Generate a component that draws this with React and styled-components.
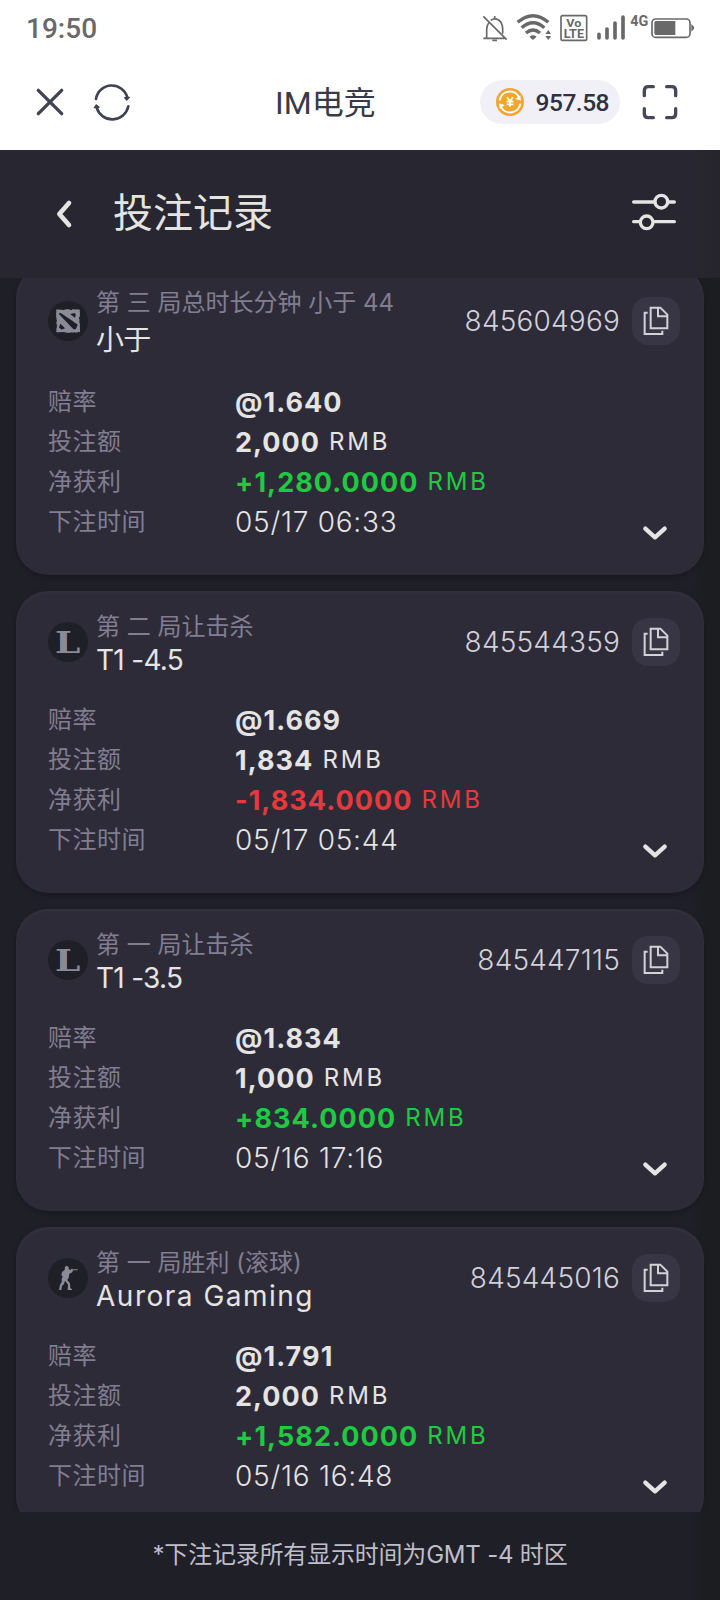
import styled, { createGlobalStyle } from "styled-components";
import { SiDota2 } from "react-icons/si";

const bets = [
  {
    id: "845604969",
    game: "dota",
    market: "第 三 局总时长分钟 小于 44",
    pick: "小于",
    odds: "@1.640",
    stake: "2,000",
    profit: "+1,280.0000",
    time: "05/17 06:33",
    tall: true,
  },
  {
    id: "845544359",
    game: "lol",
    market: "第 二 局让击杀",
    pick: "T1 -4.5",
    odds: "@1.669",
    stake: "1,834",
    profit: "-1,834.0000",
    time: "05/17 05:44",
  },
  {
    id: "845447115",
    game: "lol",
    market: "第 一 局让击杀",
    pick: "T1 -3.5",
    odds: "@1.834",
    stake: "1,000",
    profit: "+834.0000",
    time: "05/16 17:16",
  },
  {
    id: "845445016",
    game: "cs",
    market: "第 一 局胜利 (滚球)",
    pick: "Aurora Gaming",
    odds: "@1.791",
    stake: "2,000",
    profit: "+1,582.0000",
    time: "05/16 16:48",
    wide: true,
  },
];

const GlobalStyle = createGlobalStyle`
  * {
    box-sizing: border-box;
  }
  body {
    margin: 0;
    background-color: #1f1f28;
  }
  svg {
    display: block;
    flex-shrink: 0;
  }
`;

const Page = styled.div`
  display: flex;
  flex-direction: column;
  width: 720px;
  height: 1600px;
  overflow: hidden;
  color: #e4e4e2;
  font-family: Inter, "Noto Sans CJK SC", sans-serif;
  white-space: nowrap;
  background: linear-gradient(to right, #1f1f28 690px, #1c1d20 708px);
`;

const StatusBar = styled.div`
  display: flex;
  justify-content: space-between;
  align-items: center;
  height: 54px;
  padding: 2px 25px 0 26px;
  background-color: #fff;
  color: #696969;
  font: 500 28px Roboto, sans-serif;
`;

const StatusIconRow = styled.div`
  display: flex;
  align-items: center;
  gap: 8px;
`;

const NetworkIcons = styled.div`
  display: flex;
  align-items: center;

  svg:nth-child(2) {
    margin-left: 4px;
  }
`;

const IconText = styled.text`
  fill: #696969;
  font-family: Roboto, sans-serif;
  font-weight: 700;
`;

const NavBar = styled.div`
  display: grid;
  grid-template-columns: 240px auto 1fr;
  align-items: center;
  height: 96px;
  padding: 0 40px 0 35px;
  background-color: #fff;
`;

const NavSide = styled.div`
  display: flex;
  align-items: center;
  justify-content: ${({ $end }) => ($end ? "flex-end" : "flex-start")};
  gap: ${({ $end }) => ($end ? "20px" : "27px")};
`;

const NavTitle = styled.div`
  padding-bottom: 4px;
  color: #383a48;
  font: 400 32px Roboto, "Noto Sans CJK SC", sans-serif;
`;

const Balance = styled.div`
  display: flex;
  align-items: center;
  justify-content: space-between;
  width: 140px;
  height: 44px;
  padding: 0 11px 0 16px;
  border-radius: 22px;
  background-color: #f1f0f6;
  color: #2f3142;
  font: 500 24.5px Roboto, sans-serif;
  letter-spacing: -0.5px;
`;

const PageHeader = styled.header`
  display: flex;
  align-items: center;
  height: 128px;
  padding: 0 44px 5px 55px;
  background: linear-gradient(to right, #282630 690px, #26242d 716px);
`;

const BackButton = styled.div`
  padding-top: 5px;
`;

const PageTitle = styled.h1`
  flex: 1;
  margin: 3px 0 0 38px;
  font-size: 40px;
  font-weight: 400;
  line-height: 56px;
`;

const List = styled.main`
  display: flex;
  flex-direction: column;
  justify-content: flex-end;
  gap: 16px;
  height: 1234px;
  padding: 0 16px;
  overflow: hidden;

  /* the list is scrolled, so its first and last cards are cut off */
  & > section:last-child {
    margin-bottom: -17px;
  }
`;

const Card = styled.section`
  flex-shrink: 0;
  padding: 20px 24px 33px 32px;
  border-radius: 32px;
  background-color: #2e2b38;
  box-shadow: 0 2px 5px rgba(0, 0, 0, 0.25), inset 0 2px 4px rgba(255, 255, 255, 0.04);
`;

const CardHeader = styled.div`
  display: flex;
  align-items: center;
  height: ${({ $tall }) => ($tall ? "69px" : "62px")};
  margin-bottom: 27px;
`;

const GameBadge = styled.div`
  display: flex;
  align-items: center;
  justify-content: center;
  width: 40px;
  height: 40px;
  margin-right: 8px;
  border-radius: 50%;
  background-color: #1f1f28;
  color: #8b8b98;
`;

const LolMark = styled.text`
  fill: #8b8b98;
  font-family: "DejaVu Serif", serif;
  font-size: 30px;
  font-weight: 700;
`;

const Names = styled.div`
  flex: 1;
  display: flex;
  flex-direction: column;
  gap: ${({ $tall }) => ($tall ? "5px" : "1px")};
  padding-top: 2px;
`;

const Market = styled.div`
  color: #817e92;
  font-size: 24px;
  line-height: 33px;
`;

const Pick = styled.div`
  font-size: 28px;
  line-height: 33px;
  letter-spacing: ${({ $wide }) => ($wide ? "1.5px" : "-0.7px")};
`;

const BetId = styled.div`
  margin-right: 12px;
  color: #d2d1d8;
  font-size: 28px;
  font-weight: 300;
  letter-spacing: 0.2px;
`;

const CopyButton = styled.div`
  width: 48px;
  height: 48px;
  border-radius: 16px;
  background-color: #383645;
`;

const Details = styled.div`
  display: flex;
  flex-direction: column;
`;

const Row = styled.div`
  display: flex;
  align-items: center;
  height: 40px;
  color: ${({ $color }) => $color || "#e4e4e2"};
`;

const Label = styled.div`
  width: 187px;
  padding-bottom: 5px;
  color: #817e92;
  font-size: 24px;
  letter-spacing: 0.5px;
`;

const Amount = styled.div`
  font-size: 27px;
  font-weight: 700;
  letter-spacing: 1.05px;
`;

const Currency = styled.div`
  margin-left: 9px;
  padding-bottom: 1px;
  font-size: 24px;
  letter-spacing: 2.8px;
`;

const Time = styled.div`
  flex: 1;
  font-size: 28px;
  font-weight: 300;
  letter-spacing: 0.75px;
`;

const Expand = styled.div`
  padding: 22px 11px 0 0;
`;

const Footer = styled.footer`
  height: 88px;
  padding-top: 25px;
  color: #bfbdca;
  font-size: 24px;
  line-height: 36px;
  letter-spacing: -0.2px;
  text-align: center;
`;

const StatusIcons = () => (
  <StatusIconRow>
    <svg width="26" height="30" viewBox="366 36 78 90" fill="none" stroke="#696969" strokeWidth="5">
      <path d="M370 46 440 116M370 112H434M380 111V86Q380 74 386 66M392 58Q404 50 416 57Q428 66 428 84V98" />
      <path d="M404 45V53M397 118H411" />
    </svg>
    <svg width="36" height="30" viewBox="468 36 108 90" fill="none" stroke="#696969" strokeWidth="10">
      <path d="M473 64Q519 24 565 64M485 80Q519 50 553 80M498 96Q519 78 540 96" />
      <path d="M508 107Q519 99 530 107L519 117ZM556 99 565 87 573 99ZM556 105H573L565 117Z" fill="#696969" stroke="none" />
    </svg>
    <svg width="28" height="30" viewBox="599 36 84 90">
      <rect x="602" y="44" width="77" height="74" rx="5" fill="none" stroke="#696969" strokeWidth="5" />
      <IconText x="618" y="77" fontSize="31" textLength="45" lengthAdjust="spacingAndGlyphs">Vo</IconText>
      <IconText x="610" y="111" fontSize="38" textLength="61" lengthAdjust="spacingAndGlyphs">LTE</IconText>
    </svg>
    <NetworkIcons>
      <svg width="30" height="30" viewBox="708 36 90 90" stroke="#696969" strokeWidth="11" strokeLinecap="round">
        <path d="M717 100V111M741 84V111M765 66V111M789 48V111" />
      </svg>
      <svg width="21" height="30" viewBox="810 36 63 90">
        <IconText x="811" y="75" fontSize="43" textLength="54" lengthAdjust="spacingAndGlyphs">4G</IconText>
      </svg>
      <svg width="44" height="30" viewBox="872 36 132 90" fill="#696969">
        <rect x="875" y="54" width="114" height="55" rx="11" fill="none" stroke="#696969" strokeWidth="5" />
        <path d="M882 65Q882 60 887 60H945V102H887Q882 102 882 97ZM993 69 1001 77V84L993 92Z" />
      </svg>
    </NetworkIcons>
  </StatusIconRow>
);

const CloseIcon = () => (
  <svg width="30" height="40" viewBox="104 245 90 120" stroke="#3f4454" strokeWidth="10" strokeLinecap="round">
    <path d="M114 270 184 340M184 270 114 340" />
  </svg>
);

const RefreshIcon = () => (
  <svg width="40" height="40" viewBox="277 245 120 120" fill="none" stroke="#3f4454" strokeWidth="8" strokeLinecap="round">
    <path d="M289 296A48 48 0 0 1 383 292M386 318A49 49 0 0 1 291 322" />
    <path d="M375 292 389 291 381 299ZM284 322 290 314 298 321Z" fill="#3f4454" strokeWidth="4" strokeLinejoin="round" />
  </svg>
);

const CoinIcon = () => (
  <svg width="28" height="28" viewBox="0 0 84 84" fill="none">
    <circle cx="42" cy="42" r="42" fill="#f0a62f" />
    <path d="M11 37A31 31 0 0 1 70 29M73 47A31 31 0 0 1 14 55" stroke="#fff" strokeWidth="6" />
    <path d="M58 33 75 38 73 22ZM26 51 9 46 11 62Z" fill="#fff" />
    <path d="M33 28 42 39 51 28M42 39V56M32 41H52M32 49H52" stroke="#fff" strokeWidth="5" />
  </svg>
);

const ScanIcon = () => (
  <svg width="40" height="40" viewBox="840 245 120 120" fill="none" stroke="#45485a" strokeWidth="10" strokeLinecap="round">
    <path d="M853 286V271Q853 259 865 259H880M920 259H935Q947 259 947 271V286M947 325V340Q947 352 935 352H920M880 352H865Q853 352 853 340V325" />
  </svg>
);

const BackIcon = () => (
  <svg width="20" height="32" viewBox="165 144 60 96" fill="none" stroke="#e4e4e2" strokeWidth="14" strokeLinecap="round" strokeLinejoin="round">
    <path d="M207 159 178 192 207 225" />
  </svg>
);

const FilterIcon = () => (
  <svg width="44" height="40" viewBox="816 124 132 120" fill="none" stroke="#e4e4e2" strokeWidth="10" strokeLinecap="round">
    <path d="M821 154H884M925 154H943M821 213H840M881 213H943" />
    <circle cx="904" cy="153" r="19" />
    <circle cx="860" cy="215" r="19" />
  </svg>
);

const CopyIcon = () => (
  <svg width="48" height="48" viewBox="816 441 144 144" fill="none" stroke="#d2d1d8" strokeWidth="6">
    <path d="M872 473H901L922 494V535H872ZM894 473V499H922M863 488H854V552H907V542" />
  </svg>
);

const ChevronDown = () => (
  <svg width="28" height="18" viewBox="843 461 84 54" fill="none" stroke="#e4e4e2" strokeWidth="13" strokeLinecap="round" strokeLinejoin="round">
    <path d="M856 475 885 501 914 475" />
  </svg>
);

const SoldierIcon = () => (
  <svg width="40" height="40" viewBox="144 114 120 120" fill="currentColor">
    <path d="M195 140 200 137 206 141V148L212 150 214 146H217V148H233V151H219L217 157 208 161 206 173 202 180 210 190 211 204 216 208V210H203L204 194 195 182 192 192 186 198 184 210H177L180 194 185 186V178L188 169 184 166 186 156 194 150Z" />
  </svg>
);

const LolIcon = () => (
  <svg width="40" height="40" viewBox="0 0 40 40">
    <LolMark transform="translate(7 31) scale(1.2 1)">L</LolMark>
  </svg>
);

const gameIcons = {
  dota: <SiDota2 size={24} />,
  lol: <LolIcon />,
  cs: <SoldierIcon />,
};

const BetCard = ({ bet }) => {
  const profitColor = bet.profit.startsWith("-") ? "#e53a3c" : "#1dca41";

  return (
    <Card>
      <CardHeader $tall={bet.tall}>
        <GameBadge>{gameIcons[bet.game]}</GameBadge>
        <Names $tall={bet.tall}>
          <Market>{bet.market}</Market>
          <Pick $wide={bet.wide}>{bet.pick}</Pick>
        </Names>
        <BetId>{bet.id}</BetId>
        <CopyButton>
          <CopyIcon />
        </CopyButton>
      </CardHeader>
      <Details>
        <Row>
          <Label>赔率</Label>
          <Amount>{bet.odds}</Amount>
        </Row>
        <Row>
          <Label>投注额</Label>
          <Amount>{bet.stake}</Amount>
          <Currency>RMB</Currency>
        </Row>
        <Row $color={profitColor}>
          <Label>净获利</Label>
          <Amount>{bet.profit}</Amount>
          <Currency>RMB</Currency>
        </Row>
        <Row>
          <Label>下注时间</Label>
          <Time>{bet.time}</Time>
          <Expand>
            <ChevronDown />
          </Expand>
        </Row>
      </Details>
    </Card>
  );
};

export default function App() {
  return (
    <Page>
      <GlobalStyle />
      <StatusBar>
        <span>19:50</span>
        <StatusIcons />
      </StatusBar>
      <NavBar>
        <NavSide>
          <CloseIcon />
          <RefreshIcon />
        </NavSide>
        <NavTitle>IM电竞</NavTitle>
        <NavSide $end>
          <Balance>
            <CoinIcon />
            <span>957.58</span>
          </Balance>
          <ScanIcon />
        </NavSide>
      </NavBar>
      <PageHeader>
        <BackButton>
          <BackIcon />
        </BackButton>
        <PageTitle>投注记录</PageTitle>
        <FilterIcon />
      </PageHeader>
      <List>
        {bets.map((bet) => (
          <BetCard key={bet.id} bet={bet} />
        ))}
      </List>
      <Footer>*下注记录所有显示时间为GMT -4 时区</Footer>
    </Page>
  );
}
